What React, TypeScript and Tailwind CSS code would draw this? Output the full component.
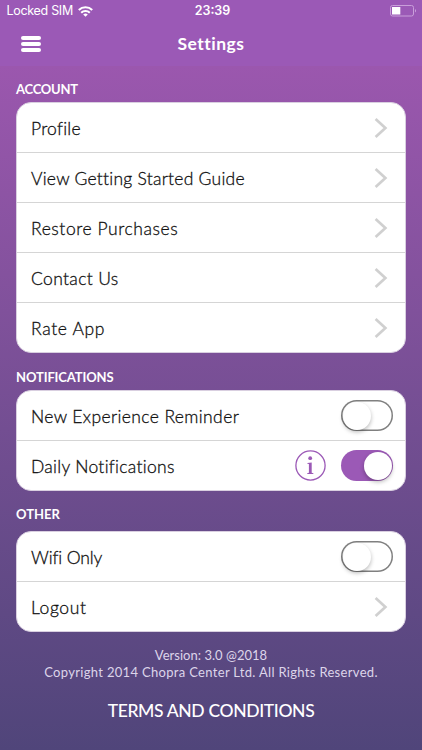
import React from 'react';

interface Item {
  label: string;
  tracking: string;
  kind: 'link' | 'toggle';
  on?: boolean;
  info?: boolean;
}

interface SectionProps {
  title: string;
  titleClass: string;
  items: Item[];
}

const accountItems: Item[] = [
  { label: 'Profile', tracking: 'tracking-[0.25px]', kind: 'link' },
  { label: 'View Getting Started Guide', tracking: 'tracking-[0.25px]', kind: 'link' },
  { label: 'Restore Purchases', tracking: 'tracking-[0.57px]', kind: 'link' },
  { label: 'Contact Us', tracking: 'tracking-[0.35px]', kind: 'link' },
  { label: 'Rate App', tracking: 'tracking-[0.65px]', kind: 'link' },
];

const notificationItems: Item[] = [
  { label: 'New Experience Reminder', tracking: 'tracking-[0.38px]', kind: 'toggle' },
  { label: 'Daily Notifications', tracking: 'tracking-[0.3px]', kind: 'toggle', on: true, info: true },
];

const otherItems: Item[] = [
  { label: 'Wifi Only', tracking: 'tracking-[-0.1px]', kind: 'toggle' },
  { label: 'Logout', tracking: 'tracking-[0.6px]', kind: 'link' },
];

const Chevron = () => (
  <svg className="mt-px mr-[5.5px] h-[22px] w-[14px]" viewBox="0 0 14 22" fill="none" stroke="#d0d0d0" strokeWidth="2.7">
    <path d="M1.6 1.9 L11.4 11 L1.6 20.1" />
  </svg>
);

const InfoIcon = () => (
  <svg className="mr-[15px] h-[31px] w-[31px]" viewBox="0 0 31 31">
    <circle cx="15.5" cy="15.5" r="14.6" fill="none" stroke="#9b59b6" strokeWidth="1.3" />
    <circle cx="15.2" cy="8.2" r="1.9" fill="#9b59b6" />
    <path d="M12.4 12.9 L16.7 12.5 V22.8 L18.4 23.2 V24.1 H12.2 V23.2 L13.9 22.8 V14 L12.4 13.7 Z" fill="#9b59b6" />
  </svg>
);

const Toggle: React.FC<{ on?: boolean }> = ({ on }) => (
  <button
    className={
      on
        ? 'flex h-[31px] w-[52px] items-center justify-end rounded-full bg-[#9b59b6] pr-[1.5px]'
        : 'flex h-[31px] w-[52px] items-center rounded-full bg-white pl-[1.5px] shadow-[inset_0_0_0_1.5px_#808080]'
    }
  >
    <span className="h-[28px] w-[28px] rounded-full bg-white shadow-[0_2px_4px_rgba(0,0,0,0.28)]" />
  </button>
);

const Section: React.FC<SectionProps> = ({ title, titleClass, items }) => (
  <section>
    <h2 className={`flex items-center text-[13px] font-bold text-white ${titleClass}`}>{title}</h2>
    <div className="rounded-[15px] border border-[#d9cfe0] bg-white">
      {items.map((item, i) => (
        <div
          key={item.label}
          className={`flex items-center pr-[12px] pl-[14px] ${i < items.length - 1 ? 'h-[50px] border-b border-[#d5d5d5]' : 'h-[49px]'}`}
        >
          <span
            className={`flex-1 pt-[3px] text-[17.5px] font-light whitespace-nowrap text-[#111111] [-webkit-text-stroke:0.3px_#111111] ${item.tracking}`}
          >
            {item.label}
          </span>
          {item.info && <InfoIcon />}
          {item.kind === 'toggle' ? <Toggle on={item.on} /> : <Chevron />}
        </div>
      ))}
    </div>
  </section>
);

const StatusBar = () => (
  <div className="grid h-[21px] grid-cols-3 items-center pr-[5px] pl-[6.5px] font-['Inter',sans-serif] text-[12.5px] text-white">
    <div className="flex items-center gap-[5px] pt-px">
      <span className="tracking-[-0.3px] whitespace-nowrap">Locked SIM</span>
      <svg className="h-[11px] w-[15px]" viewBox="0 0 15 11" fill="none" stroke="white" strokeWidth="2.1">
        <path d="M0.8 4 A9.6 9.6 0 0 1 14.2 4" />
        <path d="M3.2 6.7 A6.2 6.2 0 0 1 11.8 6.7" />
        <path d="M7.5 10.8 L5.2 8.6 A3.3 3.3 0 0 1 9.8 8.6 Z" fill="white" stroke="none" />
      </svg>
    </div>
    <span className="pt-px pl-[1.5px] text-center font-semibold">23:39</span>
    <svg className="h-[12px] w-[27px] justify-self-end" viewBox="0 0 27 12">
      <rect x="0.5" y="0.5" width="23" height="10.5" rx="2" fill="none" stroke="#c99fda" />
      <rect x="2" y="2" width="8.3" height="7.5" fill="white" />
      <path d="M25 4 C26.4 4.5 26.4 7 25 7.5 Z" fill="#c99fda" />
    </svg>
  </div>
);

const App = () => {
  return (
    <div className="flex h-[750px] w-full flex-col overflow-hidden bg-[#9b59b6] font-['Lato',sans-serif]">
      <StatusBar />
      <header className="grid h-[45px] grid-cols-3 items-center px-[21px]">
        <button className="flex w-[20px] flex-col gap-[2px]">
          <span className="h-[4px] rounded-full bg-white" />
          <span className="h-[4px] rounded-full bg-white" />
          <span className="h-[4px] rounded-full bg-white" />
        </button>
        <h1 className="pt-px text-center text-[17.5px] font-bold tracking-[0.5px] text-white">Settings</h1>
      </header>
      <main className="flex-1 bg-linear-to-b from-[#9b57ae] to-[#50457a] px-[16px]">
        <Section title="ACCOUNT" titleClass="h-[36px] pt-[11px] tracking-[-0.25px]" items={accountItems} />
        <Section title="NOTIFICATIONS" titleClass="h-[37px] pt-[12px] tracking-[-0.12px]" items={notificationItems} />
        <Section title="OTHER" titleClass="h-[40px] pt-[8px] tracking-[0px]" items={otherItems} />
        <footer className="flex flex-col items-center text-center">
          <p className="mt-[15px] text-[13px] leading-[16.5px] tracking-[0.03px] whitespace-nowrap text-[#ddd5ea]">Version: 3.0 @2018</p>
          <p className="text-[13px] leading-[16.5px] tracking-[0.32px] whitespace-nowrap text-[#ddd5ea]">
            Copyright 2014 Chopra Center Ltd. All Rights Reserved.
          </p>
          <a className="mt-[19px] text-[17.5px] leading-[24px] font-medium tracking-[-0.35px] whitespace-nowrap text-white">TERMS AND CONDITIONS</a>
        </footer>
      </main>
    </div>
  );
};

export default App;
